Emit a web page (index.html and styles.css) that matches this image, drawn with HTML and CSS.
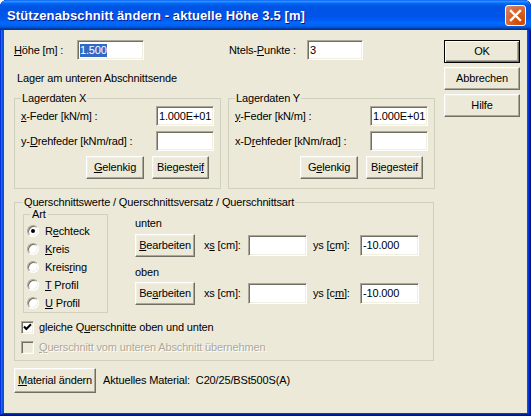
FILE: index.html
```html
<!DOCTYPE html>
<html lang="de">
<head>
<meta charset="utf-8">
<title>Stützenabschnitt ändern</title>
<link rel="stylesheet" href="styles.css">
</head>
<body>
<div class="window">
  <div class="titlebar">
    <span class="title">Stützenabschnitt ändern - aktuelle Höhe 3.5 [m]</span>
    <span class="close">
      <svg width="21" height="21" viewBox="0 0 21 21"><path d="M6 6 L15 15 M15 6 L6 15" stroke="#fff" stroke-width="2.4" stroke-linecap="square" fill="none"/></svg>
    </span>
  </div>
  <div class="client">
    <div class="main">
      <div class="row1">
        <span class="lbl-hoehe"><u>H</u>öhe [m] :</span>
        <div class="edit w-hoehe"><span class="sel">1.500</span></div>
        <span class="lbl-ntels">Ntels-<u>P</u>unkte :</span>
        <div class="edit w-ntels">3</div>
      </div>
      <div class="caption">Lager am unteren Abschnittsende</div>
      <div class="lager-row">
        <fieldset class="group lager">
          <legend>Lagerdaten X</legend>
          <div class="frow first"><span><u>x</u>-Feder [kN/m] :</span><div class="edit w-lager">1.000E+01</div></div>
          <div class="frow"><span>y-<u>D</u>rehfeder [kNm/rad] :</span><div class="edit w-lager"></div></div>
          <div class="brow"><div class="btn w-gel"><span><u>G</u>elenkig</span></div><div class="btn w-bieg"><span>Biegestei<u>f</u></span></div></div>
        </fieldset>
        <fieldset class="group lager">
          <legend>Lagerdaten Y</legend>
          <div class="frow first"><span><u>y</u>-Feder [kN/m] :</span><div class="edit w-lager">1.000E+01</div></div>
          <div class="frow"><span>x-D<u>r</u>ehfeder [kNm/rad] :</span><div class="edit w-lager"></div></div>
          <div class="brow"><div class="btn w-gel"><span>G<u>e</u>lenkig</span></div><div class="btn w-bieg"><span>B<u>i</u>egesteif</span></div></div>
        </fieldset>
      </div>
      <fieldset class="group qs">
        <legend>Querschnittswerte / Querschnittsversatz / Querschnittsart</legend>
        <div class="qs-top">
          <fieldset class="group art">
            <legend>Art</legend>
            <div class="radio first"><span class="rb checked"></span><span>R<u>e</u>chteck</span></div>
            <div class="radio"><span class="rb"></span><span><u>K</u>reis</span></div>
            <div class="radio"><span class="rb"></span><span>Kreis<u>r</u>ing</span></div>
            <div class="radio"><span class="rb"></span><span><u>T</u> Profil</span></div>
            <div class="radio"><span class="rb"></span><span><u>U</u> Profil</span></div>
          </fieldset>
          <div class="qs-right">
            <div class="sub">unten</div>
            <div class="qrow">
              <div class="btn w-bearb"><span><u>B</u>earbeiten</span></div>
              <span class="lbl-xs">x<u>s</u> [cm]:</span>
              <div class="edit w-qs"></div>
              <span class="lbl-ys">ys [<u>c</u>m]:</span>
              <div class="edit w-qs">-10.000</div>
            </div>
            <div class="sub sub2">oben</div>
            <div class="qrow qrow2">
              <div class="btn w-bearb"><span>Be<u>a</u>rbeiten</span></div>
              <span class="lbl-xs">xs [cm]:</span>
              <div class="edit w-qs"></div>
              <span class="lbl-ys">ys [c<u>m</u>]:</span>
              <div class="edit w-qs">-10.000</div>
            </div>
          </div>
        </div>
        <div class="check first"><span class="cb"><svg width="11" height="11" viewBox="0 0 11 11"><path d="M2 4.5 L4.3 7 L9 2.2" stroke="#000" stroke-width="2" fill="none"/></svg></span><span>gleiche Q<u>u</u>erschnitte oben und unten</span></div>
        <div class="check disabled"><span class="cb"></span><span><u>Q</u>uerschnitt vom unteren Abschnitt übernehmen</span></div>
      </fieldset>
      <div class="mat-row">
        <div class="btn w-mat"><span><u>M</u>aterial ändern</span></div>
        <span class="mat-text">Aktuelles Material:  C20/25/BSt500S(A)</span>
      </div>
    </div>
    <div class="side">
      <div class="btn default"><span>OK</span></div>
      <div class="btn"><span>Abbrechen</span></div>
      <div class="btn"><span>Hilfe</span></div>
    </div>
  </div>
</div>
</body>
</html>
```
FILE: styles.css
```css
* { box-sizing: border-box; }
html, body { margin: 0; padding: 0; background: #ffffff; }
body {
  font-family: "Liberation Sans", Arial, sans-serif;
  font-size: 11px;
  line-height: 13px;
  color: #000;
  letter-spacing: -0.15px;
}
u { text-underline-offset: 1px; }

.window {
  width: 531px;
  height: 416px;
  display: flex;
  flex-direction: column;
  background: #0055e5;
  border-radius: 7px 7px 0 0;
  overflow: hidden;
  box-shadow: inset -1px -1px #00138c, inset 1px 1px #0831d9, inset -2px -2px #001ea0, inset 2px 2px #166aee, inset -3px -3px #003bda, inset 3px 3px #0855dd;
}
.titlebar {
  height: 30px;
  flex: none;
  display: flex;
  align-items: center;
  justify-content: space-between;
  padding: 0 5px 0 7px;
  background: linear-gradient(to bottom, #0058ee 0%, #3a93ff 4%, #288eff 6%, #127dff 8%, #036ffc 10%, #0262ee 14%, #0057e5 20%, #0054e3 24%, #0055eb 56%, #005bf5 66%, #026afe 76%, #0062ef 86%, #0052d6 92%, #0040ab 94%, #003092 100%);
}
.title {
  color: #fff;
  font-weight: bold;
  font-size: 13px;
  letter-spacing: 0.1px;
  text-shadow: 1px 1px 0 #0a1a88;
  padding-top: 1px;
}
.close {
  width: 21px;
  height: 21px;
  border: 1px solid #fff;
  border-radius: 3px;
  background: radial-gradient(circle at 75% 80%, #cc4600 0%, #dc6527 55%, #cd7356 70%, #e5a01a00 100%), linear-gradient(#ec8a6c, #d9502c);
  display: flex;
  align-items: center;
  justify-content: center;
  margin-top: 1px;
}
.close svg { display: block; margin: -1px; }

.client {
  flex: 1;
  margin: 0 4px 3px 4px;
  background: #ece9d8;
  display: flex;
}
.main { width: 440px; padding: 10px 0 0 10px; }
.side {
  width: 76px;
  padding-top: 10px;
  display: flex;
  flex-direction: column;
  gap: 4px;
}
.side .btn { height: 23px; width: 76px; }

/* controls */
.edit {
  height: 20px;
  background: #fff;
  border: 1px solid;
  border-color: #aca899 #fff #fff #aca899;
  box-shadow: inset 1px 1px #716f64, inset -1px -1px #f1efe2;
  display: flex;
  align-items: center;
  padding-left: 2px;
  white-space: nowrap;
}
.btn {
  background: #ece9d8;
  border: 1px solid;
  border-color: #fff #716f64 #716f64 #fff;
  box-shadow: inset -1px -1px #aca899, inset 1px 1px #f1efe2;
  display: flex;
  align-items: center;
  justify-content: center;
  white-space: nowrap;
  height: 23px;
}
.btn.default {
  border: 1px solid #000;
  box-shadow: inset 1px 1px #fff, inset -1px -1px #716f64, inset -2px -2px #aca899;
}
.sel { background: #316ac5; color: #fff; padding: 0 0 0 0; }

.row1 { display: flex; align-items: center; height: 20px; }
.lbl-hoehe { width: 63px; }
.w-hoehe { width: 67px; }
.lbl-ntels { margin-left: 85px; width: 78px; }
.w-ntels { width: 56px; }

.caption { margin-top: 12px; padding-left: 3px; }

.lager-row { display: flex; gap: 7px; margin-top: 7px; }
.group {
  margin: 0;
  border: 1px solid #d0d0bf;
  min-width: 0;
}
.group legend { padding: 0 1px; line-height: 13px; }
.lager { width: 207px; padding: 0 6px 9px 6px; }
.frow {
  display: flex;
  justify-content: space-between;
  align-items: center;
  height: 20px;
  margin-top: 5px;
}
.frow.first { margin-top: 1px; }
.w-lager { width: 58px; }
.brow {
  display: flex;
  justify-content: flex-end;
  gap: 8px;
  margin-top: 5px;
  padding-right: 5px;
}
.w-gel { width: 58px; }
.w-bieg { width: 57px; }

.qs { width: 420px; margin-top: 7px; padding: 0 8px 3px 8px; }
.qs-top { display: flex; }
.art { width: 85px; margin-top: -1px; padding: 0 0 0 3px; }
.art legend { margin-left: 3px; padding: 0 2px; }
.radio { display: flex; align-items: center; height: 18px; }
.radio.first { margin-top: 1px; }
.rb {
  width: 12px;
  height: 12px;
  border-radius: 50%;
  background: #fff;
  border: 1px solid;
  border-color: #aca899 #fff #fff #aca899;
  box-shadow: inset 1px 1px #716f64, inset -1px -1px #f1efe2;
  margin-right: 6px;
  position: relative;
  flex: none;
}
.rb.checked::after {
  content: "";
  position: absolute;
  left: 3px;
  top: 3px;
  width: 4px;
  height: 4px;
  border-radius: 50%;
  background: #000;
}
.qs-right { margin-left: 27px; margin-top: 8px; }
.sub { line-height: 13px; }
.sub2 { margin-top: 9px; }
.qrow { display: flex; align-items: center; height: 23px; margin-top: 4px; }
.qrow2 { margin-top: 3px; }
.w-bearb { width: 60px; }
.lbl-xs { margin-left: 9px; width: 44px; }
.lbl-ys { margin-left: 6px; width: 47px; }
.w-qs { width: 59px; height: 21px; }

.check { display: flex; align-items: center; height: 20px; margin-left: -2px; }
.check.first { margin-top: 4px; }
.cb {
  width: 13px;
  height: 13px;
  background: #fff;
  border: 1px solid;
  border-color: #aca899 #fff #fff #aca899;
  box-shadow: inset 1px 1px #716f64, inset -1px -1px #f1efe2;
  margin-right: 5px;
  flex: none;
  display: flex;
  align-items: center;
  justify-content: center;
}
.cb svg { display: block; }
.check.disabled { color: #aca899; text-shadow: 1px 1px 0 #fff; }
.check.disabled .cb { background: #ece9d8; }

.mat-row { display: flex; align-items: center; margin-top: 7px; }
.w-mat { width: 82px; height: 25px; }
.mat-text { margin-left: 7px; white-space: pre; }
```
